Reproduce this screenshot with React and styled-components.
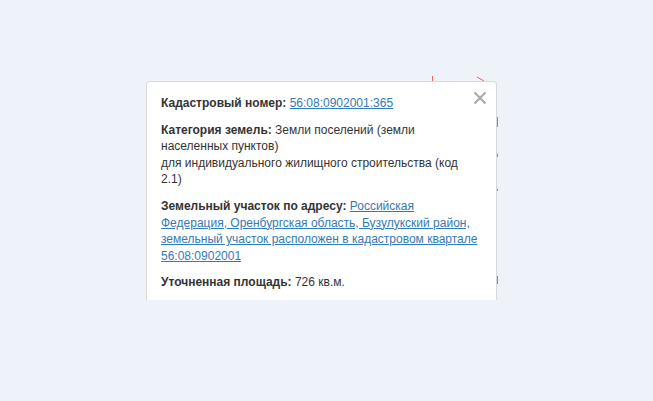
import React from "react";
import styled, { createGlobalStyle } from "styled-components";

const GlobalStyle = createGlobalStyle`
  html, body {
    margin: 0;
    padding: 0;
    background: #eef2f9;
  }
`;

const Page = styled.div`
  position: relative;
  width: 653px;
  height: 401px;
  padding: 81px 0 0 146px;
  box-sizing: border-box;
  overflow: hidden;
  font-family: "Liberation Sans", Arial, sans-serif;
`;

const MapLines = styled.svg`
  position: absolute;
  left: 0;
  top: 0;
  pointer-events: none;
`;

const Popup = styled.div`
  position: relative;
  width: 351px;
  height: 219px;
  box-sizing: border-box;
  background: #fff;
  border: 1px solid #d9d9d9;
  border-bottom: none;
  border-radius: 4px 4px 0 0;
  overflow: hidden;
`;

const Body = styled.div`
  padding: 13px 15px 0 14px;
  font-size: 12px;
  line-height: 16.6px;
  color: #333;
`;

const Row = styled.p`
  margin: 0 0 10px;
`;

const Label = styled.b`
  font-weight: bold;
`;

const Link = styled.a`
  color: #337ab7;
  text-decoration: underline;
  cursor: pointer;
`;

const Next = styled.div`
  margin: 0 14px;
  border-top: 2px solid #eef0f4;
  height: 20px;
`;

const Close = styled.button`
  position: absolute;
  top: 9px;
  right: 9px;
  width: 14px;
  height: 14px;
  padding: 0;
  border: none;
  background: transparent;
  cursor: pointer;
  display: flex;
`;

export default function App() {
  return (
    <>
      <GlobalStyle />
      <Page>
        <MapLines width="653" height="401">
          <g stroke="#f06060" strokeWidth="1" fill="none">
            <line x1="432.5" y1="76" x2="432.5" y2="83" />
            <line x1="477" y1="77" x2="484" y2="81" />
            <line x1="497.5" y1="117" x2="497.5" y2="127" />
            <line x1="497.5" y1="154" x2="497.5" y2="157" />
            <line x1="497.5" y1="189" x2="497.5" y2="191" />
            <line x1="497.5" y1="276" x2="497.5" y2="284" />
          </g>
        </MapLines>
        <Popup>
          <Close aria-label="Закрыть">
            <svg width="14" height="14" viewBox="0 0 14 14">
              <path d="M1.5 1.5 L12.5 12.5 M12.5 1.5 L1.5 12.5" stroke="#a8a8a8" strokeWidth="2" />
            </svg>
          </Close>
          <Body>
            <Row>
              <Label>Кадастровый номер:</Label> <Link>56:08:0902001:365</Link>
            </Row>
            <Row>
              <Label>Категория земель:</Label> Земли поселений (земли
              населенных пунктов)
              <br />
              для индивидуального жилищного строительства (код 2.1)
            </Row>
            <Row>
              <Label>Земельный участок по адресу:</Label>{" "}
              <Link>
                Российская Федерация, Оренбургская область, Бузулукский район,
                земельный участок расположен в кадастровом квартале
                56:08:0902001
              </Link>
            </Row>
            <Row>
              <Label>Уточненная площадь:</Label> 726 кв.м.
            </Row>
          </Body>
          <Next />
        </Popup>
      </Page>
    </>
  );
}
